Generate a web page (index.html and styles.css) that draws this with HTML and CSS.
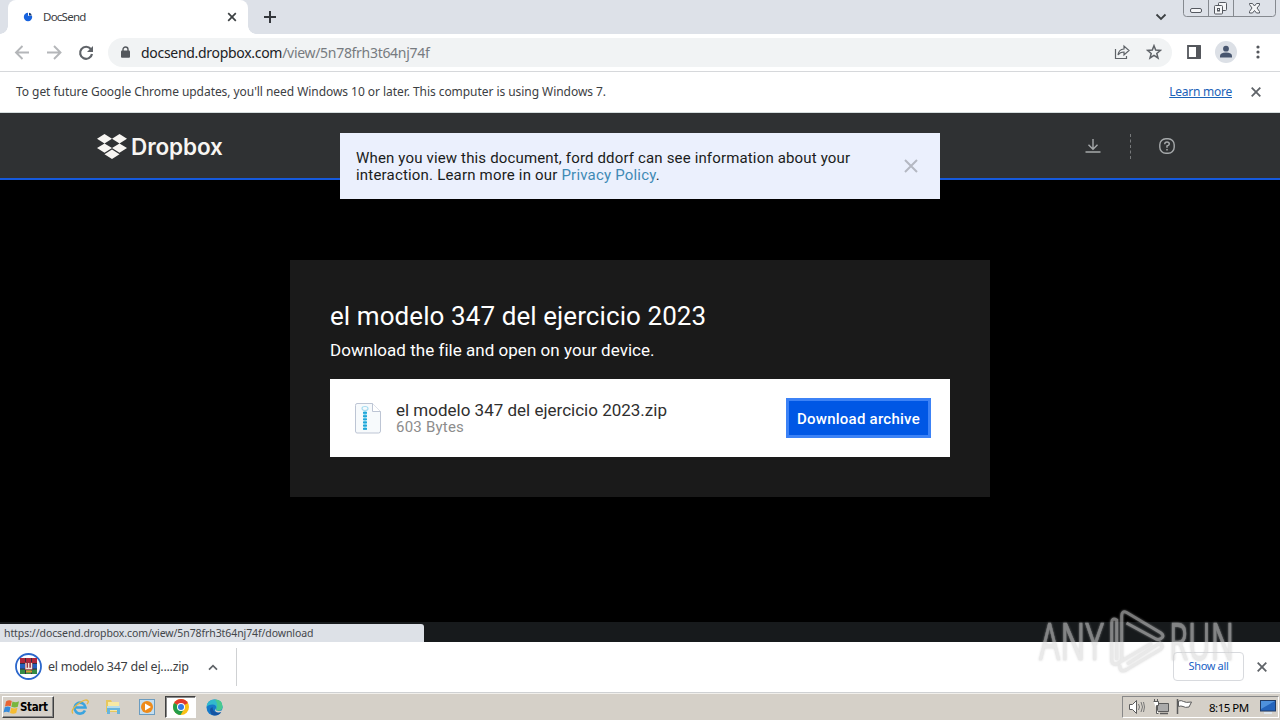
FILE: index.html
```html
<!DOCTYPE html>
<html lang="en">
<head>
<meta charset="utf-8">
<title>DocSend</title>
<link rel="stylesheet" href="styles.css">
</head>
<body>
<div class="screen">
  <div class="tabstrip">
    <div class="tab">
      <svg class="favicon" width="10" height="10" viewBox="0 0 10 10"><circle cx="5" cy="5" r="4.200" fill="#1763df"/><path d="M5 3.800V0h5v3.800z" fill="#fff"/><path d="M6 3.500V.8A3.400 3.400 0 0 1 8.800 3.500z" fill="#173a73"/></svg>
      <span class="tab-title">DocSend</span>
      <svg class="tab-close" width="10" height="10" viewBox="0 0 10 10"><path d="M1.200 1.200l7.600 7.600M8.800 1.200L1.200 8.800" stroke="#3c4043" stroke-width="1.700"/></svg>
    </div>
    <svg class="newtab" width="12" height="12" viewBox="0 0 12 12"><path d="M6 0v12M0 6h12" stroke="#34373c" stroke-width="2"/></svg>
    <svg class="tabsearch" width="12" height="8" viewBox="0 0 12 8"><path d="M1.500 1.500L6 6l4.500-4.500" fill="none" stroke="#3c4043" stroke-width="1.800"/></svg>
    <svg class="caption" width="94" height="18" viewBox="0 0 94 18"><path d="M.5 0v13.500q0 3 3 3h86q3 0 3-3V0M25.500 0v16M50.500 0v16" fill="none" stroke="#85898f"/><g fill="#f4f5f7" stroke="#555960"><rect x="7.500" y="8.500" width="11" height="4" rx="1.500"/><rect x="35.500" y="2.500" width="8" height="8" rx="1"/><rect x="31.500" y="5.500" width="8" height="8.500" rx="1"/><rect x="34.500" y="8.500" width="2" height="2.500"/><path d="M66.500 3.500h3l2 2.500 2-2.500h3v1.500L74 8l2.500 3.500V13h-3l-2-2.500-2 2.500h-3v-1.500L69 8l-2.500-3.500z"/></g></svg>
  </div>
  <div class="toolbar">
    <svg class="nav" width="94" height="20" viewBox="0 0 94 20"><g fill="none" stroke="#b4b6b9" stroke-width="1.900"><path d="M15 9.500H2.300M8.500 3L2 9.500 8.500 16M33 9.500h13M40 3l6.500 6.500L40 16"/></g><path d="M76.800 6A6 6 0 1 0 78 11" fill="none" stroke="#5f6368" stroke-width="2.200"/><path d="M79 3v6h-6z" fill="#5f6368"/></svg>
    <div class="omnibox">
      <svg class="lock" width="9" height="12" viewBox="0 0 9 12"><path d="M2 6V3.500a2.500 2.500 0 0 1 5 0V6" fill="none" stroke="#54585d" stroke-width="1.400"/><rect y="4.500" width="9" height="7.200" rx="1" fill="#54585d"/></svg>
      <span class="url"><span class="host">docsend.dropbox.com</span><span class="path">/view/5n78frh3t64nj74f</span></span>
      <svg class="share" width="16" height="16" viewBox="0 0 16 16"><path d="M1.500 5v9.500h11V12" fill="none" stroke="#5f6368" stroke-width="1.200"/><path d="M4 11q.5-5.500 6-6V2l5 4.500-5 4.500V8q-4 0-6 3z" fill="none" stroke="#5f6368" stroke-width="1.200"/></svg>
      <svg class="star" width="16" height="16" viewBox="0 0 16 16"><path d="M8 1.700l1.700 4.400 4.700.3-3.600 3 1.200 4.600L8 11.400 4 14l1.200-4.600-3.600-3 4.700-.3z" fill="none" stroke="#5f6368" stroke-width="1.500"/></svg>
    </div>
    <svg class="panel" width="14" height="14" viewBox="0 0 14 14"><path d="M1 1h12v12H1z" fill="none" stroke="#54575c" stroke-width="1.800"/><path d="M9 1h5v12H9z" fill="#54575c"/></svg>
    <svg class="avatar" width="22" height="22" viewBox="0 0 22 22"><circle cx="11" cy="11" r="11" fill="#dce0e6"/><circle cx="11" cy="7.700" r="2.900" fill="#48566f"/><path d="M5 16.500v-1.500q0-3.500 6-3.500t6 3.500v1.500z" fill="#48566f"/></svg>
    <svg class="dots" width="4" height="14" viewBox="0 0 4 14"><g fill="#54575c"><circle cx="2" cy="2" r="1.600"/><circle cx="2" cy="7" r="1.600"/><circle cx="2" cy="12" r="1.600"/></g></svg>
  </div>
  <div class="infobar">
    <span class="info-text">To get future Google Chrome updates, you'll need Windows 10 or later. This computer is using Windows 7.</span>
    <a class="learn">Learn more</a>
    <svg class="info-close" width="10" height="10" viewBox="0 0 10 10"><path d="M.7.7l8.600 8.600M9.300.7L.7 9.300" stroke="#5f6368" stroke-width="1.800"/></svg>
  </div>
  <main class="page">
    <header class="site-header">
      <svg class="dbx" width="30" height="25" viewBox="0 0 30 25"><path d="M7.500 0L15 4.700 7.500 9.400 0 4.700zM22.500 0L30 4.700l-7.500 4.700L15 4.700zM7.500 9.400L15 14.100l-7.500 4.700L0 14.100zM22.500 9.400l7.500 4.700-7.500 4.700-7.500-4.700zM15 15.600l7.500 4.700L15 25l-7.500-4.700z" fill="#f7f5f2"/></svg>
      <span class="dbx-name">Dropbox</span>
      <svg class="dl" width="16" height="16" viewBox="0 0 16 16"><path d="M8 1v10M3.500 6.800L8 11.300l4.500-4.500M.5 14h15" fill="none" stroke="#a6a9ab" stroke-width="1.400"/></svg>
      <span class="dash"></span>
      <svg class="help" width="16" height="16" viewBox="0 0 16 16"><rect x=".8" y=".8" width="14.400" height="14.400" rx="6" fill="none" stroke="#a6a9ab" stroke-width="1.400"/><path d="M5.700 6.200Q5.800 4 8 4t2.300 2Q10.300 7.200 8 8v1.700M8 10.900v1.500" fill="none" stroke="#a6a9ab" stroke-width="1.500"/></svg>
    </header>
    <div class="notice">
      <p class="notice-text"><span class="n1">When you view this document, ford ddorf can see information about your</span><br><span class="n2">interaction. Learn more in our <a>Privacy Policy</a>.</span></p>
      <svg width="14" height="14" viewBox="0 0 14 14"><path d="M1 1l12 12M13 1L1 13" stroke="#b4b8c2" stroke-width="2"/></svg>
    </div>
    <section class="card">
      <h1><span>el modelo 347 del ejercicio 2023</span></h1>
      <p class="sub"><span>Download the file and open on your device.</span></p>
      <div class="file">
        <svg class="zip" width="28" height="32" viewBox="0 0 28 32"><path d="M3 1.500h15.500l8 8V29q0 2-2 2H3q-1.500 0-1.500-2V3.500q0-2 1.500-2z" fill="#f7fafc" stroke="#bdc5d4"/><path d="M18.500 1.500v8h8" fill="#fff" stroke="#bdc5d4"/><ellipse cx="11" cy="6.500" rx="3" ry="2" fill="none" stroke="#a6dcf0" stroke-width="1.200"/><path d="M11 9v19" stroke="#8ad7f1" stroke-width="3"/><path d="M11 10v18" stroke="#20a6d8" stroke-width="4" stroke-dasharray="1.700 1.500"/></svg>
        <div class="file-info"><div class="fname"><span>el modelo 347 del ejercicio 2023.zip</span></div><div class="fsize"><span>603 Bytes</span></div></div>
        <button class="download"><span>Download archive</span></button>
      </div>
    </section>
    <div class="bottom-strip"></div>
    <div class="status"><span>https://docsend.dropbox.com/view/5n78frh3t64nj74f/download</span></div>
  </main>
  <div class="shelf">
    <svg class="rar" width="28" height="28" viewBox="0 0 28 28"><circle cx="13.500" cy="13.500" r="12.500" fill="#fff" stroke="#2b67cc" stroke-width="1.800"/><path d="M5 5h17v5H5z" fill="#b0263a"/><path d="M5 10h17v6H5z" fill="#245fbc"/><path d="M5 16h17v5H5z" fill="#358b45"/><path d="M10.500 5v16M16.500 5v16M5 10.500h17M5 16h17" stroke="#332d45"/><path d="M10 9h7.500v8H10z" fill="#9b3040"/><path d="M11 10v5.500h5.500V10M13.700 10v5.500" fill="none" stroke="#f1e6da" stroke-width="1.300"/><path d="M11 18.500h6" stroke="#d99935" stroke-width="2"/></svg>
    <span class="dl-name">el modelo 347 del ej....zip</span>
    <svg class="chev" width="10" height="7" viewBox="0 0 10 7"><path d="M1 5.700l4-4 4 4" fill="none" stroke="#5f6368" stroke-width="1.700"/></svg>
    <span class="shelf-line"></span>
    <button class="showall"><span>Show all</span></button>
    <svg class="shelf-close" width="10" height="10" viewBox="0 0 10 10"><path d="M.7.7l8.600 8.600M9.300.7L.7 9.300" stroke="#5f6368" stroke-width="1.800"/></svg>
  </div>
  <footer class="taskbar">
    <div class="start"><svg width="17" height="16" viewBox="0 0 17 16"><path d="M3 2.500q3-2 5.800-.5L7.700 7.300Q5 6 2 7.500z" fill="#e96534"/><path d="M9.500 2.500q3 1.500 6.500-.2L14.800 7.800q-3 1.500-6.500 0z" fill="#79b63d"/><path d="M1.800 8.300q3-1.500 5.700 0L6.300 13.500Q3.500 12 .5 13.500z" fill="#378bdb"/><path d="M8.200 8.700q3 1.500 6.300 0L13.200 14q-3 1.500-6.200 0z" fill="#f5bc32"/></svg><span>Start</span></div>
    <svg class="task ie" width="18" height="18" viewBox="0 0 18 18"><path d="M14 12.500A5.500 5.500 0 1 1 14.500 9.500H5" fill="none" stroke="#3ba4df" stroke-width="2.600"/><path d="M2 15.500Q-1 12 7 6t10-3q1 1-1 3" fill="none" stroke="#e6b941" stroke-width="1.300"/></svg>
    <svg class="task folder" width="18" height="18" viewBox="0 0 18 18"><path d="M2 2h5l1 2h7v10H2z" fill="#e7c75d"/><path d="M4 4h11v9H4z" fill="#f7e9a3"/><path d="M3 8h13v8h-3v-4H6v4H3z" fill="#68b5dc"/><path d="M3 8h13v2H3z" fill="#b4dceb"/></svg>
    <svg class="task media" width="17" height="18" viewBox="0 0 17 18"><rect x=".5" y="1.500" width="15" height="15" fill="#c4def0" stroke="#6b9cc0"/><circle cx="8" cy="9" r="6" fill="#ee8b1b"/><path d="M6 5.500l6 3.500-6 3.500z" fill="#fff"/></svg>
    <div class="active-task"><svg width="16" height="16" viewBox="0 0 16 16"><circle cx="8" cy="8" r="8" fill="#fbc116"/><path d="M8 8L1.100 4A8 8 0 0 1 14.900 4z" fill="#e33b2e"/><path d="M8 8L1.100 4A8 8 0 0 0 7.500 16L11 10z" fill="#249d4a"/><circle cx="8" cy="8" r="4" fill="#fff"/><circle cx="8" cy="8" r="3" fill="#347be5"/></svg></div>
    <svg class="task edge" width="17" height="17" viewBox="0 0 17 17"><circle cx="8.500" cy="8.500" r="8" fill="#1679c9"/><path d="M.6 8Q1 .5 8.500.5q8 0 8 7 0 4-4 4-3 0-2-2 0-4-4-4Q2 5.500.6 8z" fill="#32b9cd"/><path d="M9 .5q7.500 0 7.500 7 0 4-4 4-3 0-2-2 2-4-1.500-9z" fill="#49c990"/><path d="M6.500 8q0 5 5 5.500 3 0 4-1-2 4-6.500 4T4 11q0-2 2.500-3z" fill="#1554a3"/><path d="M10 9q-1 3 2.500 3 2.500 0 4-1l.5 1.500q-7 2.500-8-1z" fill="#d6d2ca"/></svg>
    <div class="tray">
      <svg width="70" height="18" viewBox="0 0 70 18"><g fill="#fff" stroke="#5b5b5b"><path d="M.5 6.500h3l4-4v13l-4-4h-3z"/><path d="M9.500 6q2 3 0 6M12 4q3 5 0 10M14.500 4q2 5 0 10" fill="none" stroke="#777"/><path d="M28.500 5.500h11v8h-11z" fill="#aaa"/><path d="M31 15.500h8" stroke-width="1.500"/><path d="M24.500 3.500h5v4h-2v8h2M25.500 1v2.500M28.500 1v2.500" /><path d="M48.500 1v15" stroke-width="1.500"/><path d="M49.500 3q3-1 5 .5t8 .5l-2.500 5q-4 1-6-.5-2-1-4.500 0z"/></g></svg>
      <span>8:15 PM</span>
      <svg class="desk" width="16" height="14" viewBox="0 0 16 14"><rect x=".5" y=".5" width="15" height="10.500" fill="#2464bc" stroke="#203b65"/><path d="M1 1h14L1 9z" fill="#4e91dd"/><path d="M4 13h8" stroke="#dce5ed" stroke-width="2"/></svg>
    </div>
  </footer>
  <svg class="watermark" width="210" height="80" viewBox="0 0 210 80">
    <g class="wm">
      <text x="7" y="53" textLength="65" lengthAdjust="spacingAndGlyphs">ANY</text>
      <text x="137" y="53" textLength="65" lengthAdjust="spacingAndGlyphs">RUN</text>
      <path d="M84.700 14v-1q-5-3-5 3v37q0 5 5 4l5-3V9q0-6 5-3.500L129 26q4 3 0 5.500-3 2-6 0L94.500 16M89.700 54L120 36M84.700 14v39M88 58q-1 8 6 5l35-21q3-3-1-6L95 57"/>
    </g>
  </svg>
</div>
</body>
</html>
```
FILE: styles.css
```css
* { box-sizing: border-box; }
body { margin: 0; background: #000; font-family: "Noto Sans", "Open Sans", sans-serif; }
svg { display: block; flex: none; }
button { font: inherit; padding: 0; }
p, h1 { margin: 0; }
.screen { width: 1280px; height: 720px; display: flex; flex-direction: column; position: relative; overflow: hidden; }
span, a { white-space: nowrap; }

.tabstrip { height: 34px; background: #dde1e8; display: flex; align-items: flex-start; padding-left: 8px; }
.tab { width: 240px; height: 34px; background: #fff; border-radius: 8px 8px 0 0; display: flex; align-items: center; padding: 0 11px 0 15px; position: relative; }
.tab::before, .tab::after { content: ""; position: absolute; bottom: 0; width: 8px; height: 8px; }
.tab::before { left: -8px; background: radial-gradient(circle at 0 0, #dde1e8 7.5px, #fff 8px); }
.tab::after { right: -8px; background: radial-gradient(circle at 100% 0, #dde1e8 7.5px, #fff 8px); }
.tab-title { font-size: 11.5px; color: #3c4043; margin-left: 10px; padding-bottom: 2px; letter-spacing: -.75px; }
.tab-close { margin-left: auto; }
.newtab { margin: 11px 0 0 16px; }
.tabsearch { margin: 13px 0 0 auto; }
.caption { margin-left: 16px; margin-right: 3px; }

.toolbar { height: 38px; background: #fff; border-bottom: 1px solid #d6d8db; display: flex; align-items: center; padding-left: 14px; }
.omnibox { width: 1064px; height: 29px; background: #f1f3f4; border-radius: 15px; display: flex; align-items: center; padding: 0 10px 0 13px; }
.lock { margin-bottom: 2px; }
.url { font-size: 14px; margin-left: 11px; color: #777b80; line-height: 20px; letter-spacing: -.3px; }
.host { color: #202124; }
.share { margin-left: auto; margin-right: 16px; }
.share, .star, .avatar, .dots, .panel { margin-bottom: 1px; }
.panel { margin-left: 15px; }
.avatar { margin-left: 14px; }
.dots { margin-left: 19px; }

.infobar { height: 41px; background: #fff; border-bottom: 1px solid #d5dddd; display: flex; align-items: center; padding: 0 19px 0 16px; font-size: 12px; color: #3c4043; }
.info-text, .learn { padding-bottom: 2px; letter-spacing: -.053px; }
.learn { margin-left: auto; color: #1b62b8; text-decoration: underline; letter-spacing: -.25px; }
.info-close { margin-left: 19px; }

.page { height: 529px; position: relative; background: #000; display: flex; flex-direction: column; }
.site-header { height: 67px; background: #2f3133; border-bottom: 2px solid #1559dc; display: flex; align-items: center; padding: 1px 105px 0 97px; }
.dbx-name { font-family: Inter, sans-serif; font-weight: 600; font-size: 22.5px; color: #f7f5f2; margin-left: 4px; letter-spacing: -.1px; }
.dl { margin-left: auto; }
.dash { height: 25px; border-left: 1px dashed #77797b; margin: 0 28px 0 29px; }
.notice { position: absolute; left: 340px; top: 20px; width: 600px; height: 66px; background: #ebf0fd; display: flex; align-items: center; justify-content: space-between; padding: 0 22px 0 16px; color: #1a1c20; }
.notice-text { font: 15px/17px Roboto, sans-serif; letter-spacing: .155px; padding-top: 2px; }
.n2 { letter-spacing: .19px; }
.notice a { color: #3f8ab5; }
.card { width: 700px; height: 237px; margin: 80px auto 0; background: #1a1a1a; padding: 40px; font-family: Roboto, sans-serif; color: #fff; }
h1 { font-weight: 400; font-size: 26px; line-height: 32px; letter-spacing: .08px; }
.sub { font-size: 17px; line-height: 20px; margin-top: 8px; letter-spacing: .03px; }
.file { height: 78px; margin-top: 19px; background: #fff; display: flex; align-items: center; padding: 0 19px 0 24px; }
.file-info { margin-left: 14px; padding-top: 1px; }
.fname { font-size: 17px; line-height: 18px; color: #2f2f2f; }
.fsize { font-size: 15px; line-height: 17px; color: #8d8d8d; letter-spacing: .22px; }
.download { margin-left: auto; width: 145px; height: 40px; background: #0057e5; border: 3px solid #3c82f6; color: #fff; font-size: 15px; font-weight: 500; letter-spacing: .25px; padding-top: 2px; }
.bottom-strip { height: 20px; margin-top: auto; background: #171a1c; }
.status { position: absolute; left: 0; bottom: 0; width: 424px; height: 18px; background: #dde1e7; border-top-right-radius: 3px; font-size: 10.5px; line-height: 18px; color: #43464a; padding-left: 4px; letter-spacing: -.085px; }

.shelf { height: 51px; background: #fff; border-bottom: 1px solid #cfd1d3; display: flex; align-items: center; padding: 0 13px 0 15px; }
.dl-name { font-size: 12.5px; color: #3c4043; margin-left: 5px; padding-bottom: 2px; letter-spacing: -.27px; }
.chev { margin-left: 19px; }
.shelf-line { height: 38px; border-left: 1px solid #cfd1d3; margin-left: 18px; }
.showall { margin-left: auto; width: 71px; height: 29px; margin-bottom: 1px; padding-bottom: 2px; background: #fff; border: 1px solid #d8dade; border-radius: 4px; color: #1a62c5; font-size: 11px; letter-spacing: -.35px; }
.shelf-close { margin-left: 13px; }

.taskbar { height: 27px; background: #d5d0c8; border-top: 1px solid #f1efeb; display: flex; align-items: center; padding: 0 0 0 2px; }
.start { width: 52px; height: 22px; border: 1px solid; border-color: #fff #404040 #404040 #fff; box-shadow: inset -1px -1px #888; display: flex; align-items: center; font: bold 11.5px "DejaVu Sans Condensed", sans-serif; }
.start span { letter-spacing: -.35px; }
.ie { margin-left: 17px; }
.folder { margin-left: 15px; }
.media { margin-left: 17px; }
.active-task { width: 31px; height: 22px; margin-left: 9px; background: #fff; border: 1px solid; border-color: #404040 #fff #fff #404040; box-shadow: inset 1px 1px #888; display: flex; align-items: center; justify-content: center; }
.edge { margin-left: 10px; }
.tray { margin-left: auto; width: 157px; height: 22px; margin-right: 1px; border: 1px solid; border-color: #888 #fff #fff #888; display: flex; align-items: center; padding: 0 2px 0 6px; font-size: 11.5px; color: #000; }
.tray span { margin-left: 10px; letter-spacing: -.5px; }
.desk { margin-left: auto; }

.watermark { position: absolute; left: 1032px; top: 607px; pointer-events: none; }
.wm { opacity: .56; filter: drop-shadow(0 0 1px #bbb); }
.wm text { font: 52px "Open Sans", sans-serif; fill: #d8d8d8; stroke: #d8d8d8; stroke-width: .5; }
.wm path { fill: none; stroke: #d8d8d8; stroke-width: 3; }
```
